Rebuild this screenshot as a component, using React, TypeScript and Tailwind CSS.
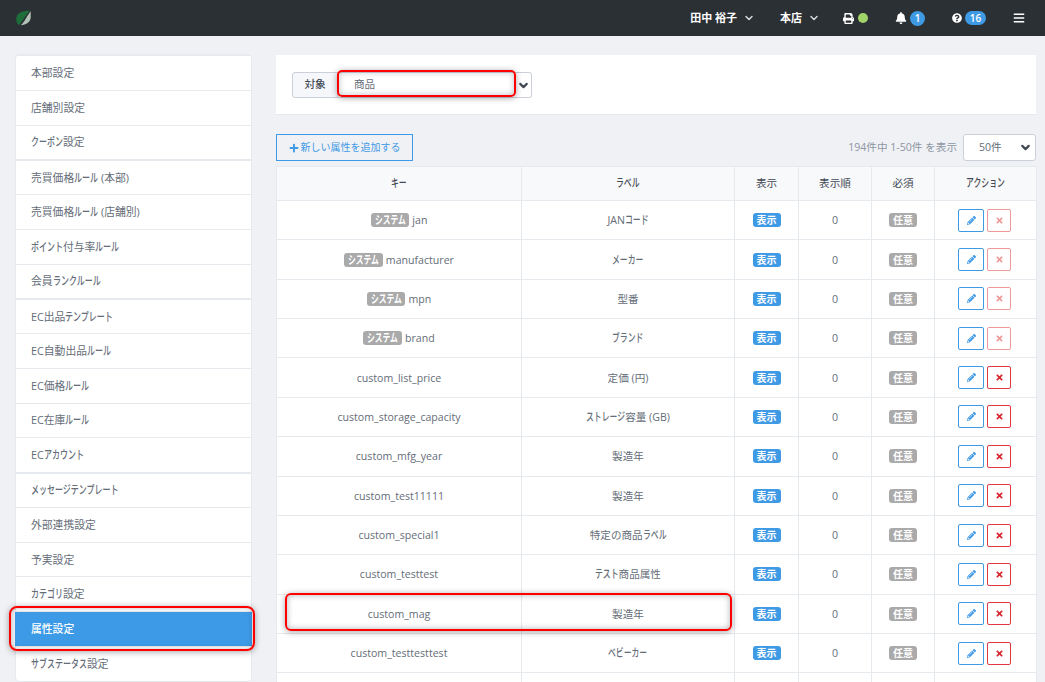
import { FaBars, FaBell, FaPencilAlt, FaPlus, FaPrint, FaQuestionCircle, FaTimes } from "react-icons/fa";
import { FiChevronDown } from "react-icons/fi";

const font = "font-['Open_Sans','Noto_Sans_CJK_JP',sans-serif]";

const menuGroups = [
  ["本部設定", "店舗別設定", "クーポン設定"],
  ["売買価格ルール (本部)", "売買価格ルール (店舗別)", "ポイント付与率ルール", "会員ランクルール"],
  ["EC出品テンプレート", "EC自動出品ルール", "EC価格ルール", "EC在庫ルール", "ECアカウント"],
  ["メッセージテンプレート", "外部連携設定", "予実設定", "カテゴリ設定", "属性設定", "サブステータス設定"],
];

const rows = [
  { key: "jan", label: "JANコード", system: true },
  { key: "manufacturer", label: "メーカー", system: true },
  { key: "mpn", label: "型番", system: true },
  { key: "brand", label: "ブランド", system: true },
  { key: "custom_list_price", label: "定価 (円)" },
  { key: "custom_storage_capacity", label: "ストレージ容量 (GB)" },
  { key: "custom_mfg_year", label: "製造年" },
  { key: "custom_test11111", label: "製造年" },
  { key: "custom_special1", label: "特定の商品ラベル" },
  { key: "custom_testtest", label: "テスト商品属性" },
  { key: "custom_mag", label: "製造年" },
  { key: "custom_testtesttest", label: "ベビーカー" },
  { key: "", label: "", empty: true },
];

// katakana in the reference font is condensed, so squeeze each run to 74%
function Kana({ text, bold }: { text: string; bold?: boolean }) {
  return (
    <>
      {text.split(/([ァ-ヶー]+)/).map((part, i) =>
        i % 2 === 1 ? (
          <span
            key={i}
            className={"inline-block origin-left scale-x-[.74] scale-y-[1.1] " + (bold ? "font-bold" : "font-medium")}
            style={{ marginRight: `${-0.26 * part.length}em` }}
          >
            {part}
          </span>
        ) : (
          part
        ),
      )}
    </>
  );
}

function TopBar() {
  return (
    <header className="flex h-9 items-center bg-[#2b3035] text-[11px] font-bold text-white">
      <svg viewBox="0 0 16 16" className="ml-[16px] h-4 w-[15px]">
        <path d="M15 .3C6 .3.3 3 .3 9c0 3 1 5.200 2.700 6.700C7 12 9 6 15 .3z" fill="#1d6f39" />
        <path d="M15.700.8v6.200C15.700 12 11 15.700 5 15.800 9.500 12 11 6.500 15.700.8z" fill="#b4c3b7" />
      </svg>
      <div className="ml-auto flex items-center">
        <span className="flex items-center">
          田中 裕子
          <FiChevronDown className="ml-[6px] text-[12px] text-[#d5d8dc]" strokeWidth={3} />
        </span>
        <span className="ml-[25px] flex items-center">
          本店
          <FiChevronDown className="ml-[6px] text-[12px] text-[#d5d8dc]" strokeWidth={3} />
        </span>
        <span className="ml-[23px] flex items-center gap-[4px]">
          <FaPrint className="text-[11px]" />
          <span className="h-[10px] w-[10px] rounded-full bg-[#a0d468]" />
        </span>
        <span className="ml-[27px] flex items-center gap-[3px]">
          <FaBell className="text-[12px]" />
          <span className="flex h-[15px] w-[15px] items-center justify-center rounded-full bg-[#3f9ae5] text-[10px] font-semibold">1</span>
        </span>
        <span className="ml-[27px] flex items-center gap-[3px]">
          <FaQuestionCircle className="text-[10px]" />
          <span className="flex h-[14px] w-[21px] items-center justify-center rounded-full bg-[#3f9ae5] text-[10px] font-semibold">16</span>
        </span>
        <FaBars className="mr-[20px] ml-[27px] text-[12px]" />
      </div>
    </header>
  );
}

function SideMenu() {
  return (
    <nav className="w-[235px] shrink-0">
      <ul className="rounded-sm bg-white text-[10.800px] text-[#656d78] shadow-[0_0_0_1px_#e6e9ed]">
        {menuGroups.map((group, g) =>
          group.map((item, i) => (
            <li
              key={item}
              className={
                "flex h-[34.78px] items-center " +
                (item === "属性設定" ? "-mx-px bg-[#3d9ae6] pr-[15px] pl-[16px] font-medium text-white " : "px-[15px] ") +
                (i === 0 && g > 0 ? "border-t-2 border-[#e6e9ed] " : "border-t border-[#e6e9ed] ")
              }
            >
              <span>
                <Kana text={item} />
              </span>
            </li>
          )),
        )}
      </ul>
    </nav>
  );
}

function Row({ row }: { row: (typeof rows)[number] }) {
  const cell = "border-t border-r border-[#e6e9ed] text-center align-middle";
  const textCell = cell + " pt-[2px]";
  if (row.empty) {
    return (
      <tr className="h-[39.37px] bg-white">
        {[0, 1, 2, 3, 4, 5].map((n) => (
          <td key={n} className={cell} />
        ))}
      </tr>
    );
  }
  return (
    <tr className="h-[39.37px] bg-white">
      <td className={textCell}>
        {row.system && (
          <span className="mr-[3px] inline-block rounded-[3px] bg-[#aaaaaa] px-[4px] text-[10.500px] leading-[14px] font-bold text-white">
            <Kana text="システム" bold />
          </span>
        )}
        {row.key}
      </td>
      <td className={textCell}>
        <Kana text={row.label} />
      </td>
      <td className={textCell}>
        <span className="inline-block rounded-[3px] bg-[#3f9ae5] px-[4px] text-[10px] leading-[14px] font-bold text-white">
          表示
        </span>
      </td>
      <td className={textCell}>0</td>
      <td className={textCell}>
        <span className="inline-block rounded-[3px] bg-[#aaaaaa] px-[4px] text-[10px] leading-[14px] font-bold text-white">
          任意
        </span>
      </td>
      <td className={cell}>
        <div className="flex justify-center gap-[3px] pr-[2px]">
          <button className="flex h-[23px] w-[26px] items-center justify-center rounded-[2px] border border-[#3f9ae5] text-[9px] text-[#3f9ae5]">
            <FaPencilAlt />
          </button>
          <button
            className={
              "flex h-[23px] w-[24px] items-center justify-center rounded-[2px] border text-[9px] " +
              (row.system ? "border-[#f09a9a] text-[#f09a9a]" : "border-[#e0383e] text-[#d9262c]")
            }
          >
            <FaTimes />
          </button>
        </div>
      </td>
    </tr>
  );
}

export default function App() {
  return (
    <div className={"relative h-[682px] w-[1045px] overflow-hidden bg-[#f0f1f5] " + font}>
      <TopBar />
      <div className="flex gap-[25px] pt-[19px] pl-4">
        <SideMenu />
        <main className="w-[760px] text-[10.600px] text-[#656d78]">
          <div className="flex h-[60px] items-center border-b border-[#e6e9ed] bg-white px-4 pt-px">
            <span className="flex h-[26px] w-[46px] items-center justify-center rounded-l-[3px] border border-[#ccd1d9] bg-[#f5f7fa] font-medium text-[#434a54]">
              対象
            </span>
            <span className="flex h-[26px] w-[194px] items-center justify-between rounded-r-[3px] border border-l-0 border-[#ccd1d9] pl-[16px]">
              商品
              <FiChevronDown className="mr-[1px] text-[13px] text-[#434a54]" strokeWidth={4} />
            </span>
          </div>
          <div className="mt-[19px] flex h-[27px] items-center justify-between">
            <button className="flex h-[27px] w-[137px] items-center justify-center gap-[2px] border border-[#3f9ae5] text-[10px] text-[#3f9ae5]">
              <FaPlus className="text-[10px]" />
              新しい属性を追加する
            </button>
            <div className="flex items-center gap-[6px] text-[#8d96a3]">
              194件中 1-50件 を表示
              <span className="flex h-[27px] w-[73px] items-center justify-between rounded-[3px] border border-[#ccd1d9] bg-white pr-[3px] pl-[15px] text-[#656d78]">
                50件
                <FiChevronDown className="text-[13px] text-[#434a54]" strokeWidth={4} />
              </span>
            </div>
          </div>
          <table className="mt-[5px] w-[760px] table-fixed border-collapse border-l border-[#e6e9ed]">
            <colgroup>
              <col className="w-[245px]" />
              <col className="w-[213px]" />
              <col className="w-[64px]" />
              <col className="w-[73px]" />
              <col className="w-[63px]" />
              <col className="w-[102px]" />
            </colgroup>
            <thead>
              <tr className="h-[34px] bg-[#f8f9fb] text-[#434a54]">
                {["キー", "ラベル", "表示", "表示順", "必須", "アクション"].map((h) => (
                  <th key={h} className="border-t border-r border-[#e6e9ed] text-center font-normal">
                    <Kana text={h} />
                  </th>
                ))}
              </tr>
            </thead>
            <tbody>
              {rows.map((row, i) => (
                <Row key={i} row={row} />
              ))}
            </tbody>
          </table>
        </main>
      </div>
      <div className="absolute top-[606px] left-[9px] h-[45px] w-[246px] rounded-[8px] border-2 border-[#ff0000] shadow-[0_1px_6px_rgba(0,0,0,0.35),inset_0_0_5px_rgba(0,0,0,0.25)]" />
      <div className="absolute top-[70px] left-[337px] h-[27px] w-[179px] rounded-[5px] border-2 border-[#ff0000] shadow-[0_1px_6px_rgba(0,0,0,0.35),inset_0_0_6px_rgba(0,0,0,0.25)]" />
      <div className="absolute top-[593px] left-[285px] h-[38px] w-[447px] rounded-[6px] border-2 border-[#ff0000] shadow-[0_1px_6px_rgba(0,0,0,0.35),inset_0_0_6px_rgba(0,0,0,0.3)]" />
    </div>
  );
}
